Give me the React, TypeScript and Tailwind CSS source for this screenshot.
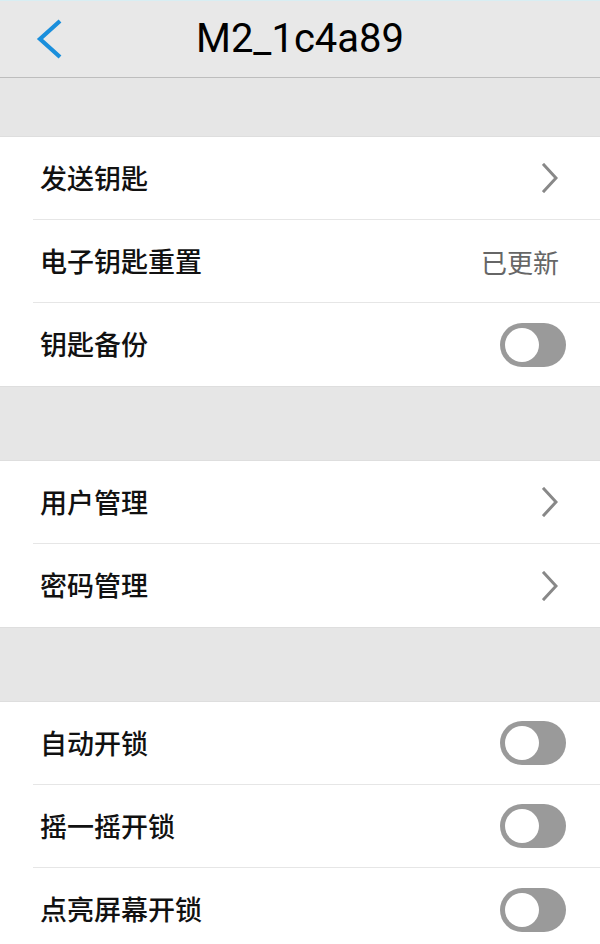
import React from "react";

const Chevron = () => (
  <svg width="16" height="30" viewBox="0 0 16 30" className="block">
    <polyline points="2,2 14,15 2,28" fill="none" stroke="#888888" strokeWidth="3" strokeLinecap="square" strokeLinejoin="miter" />
  </svg>
);

const Toggle = () => (
  <div className="w-[66px] h-[44px] rounded-full bg-[#9a9a9a] flex items-center pl-[5px]">
    <div className="w-[34px] h-[34px] rounded-full bg-white" />
  </div>
);

type RowProps = { label: string; right: "chevron" | "toggle" | "text"; text?: string; last?: boolean };

const Row = ({ label, right, text, last }: RowProps) => (
  <div className="pl-[33px] bg-white">
    <div
      className={
        "h-[83px] flex items-center justify-between pl-[7px] " +
        (last ? "" : "border-b border-[#e6e6e6] ") +
        (right === "toggle" ? "pr-[34px]" : right === "chevron" ? "pr-[42px]" : "pr-[41px]")
      }
    >
      <span className="text-[27px] font-medium text-[#111]">{label}</span>
      {right === "chevron" && <Chevron />}
      {right === "toggle" && <Toggle />}
      {right === "text" && <span className="text-[26px] text-[#666]">{text}</span>}
    </div>
  </div>
);

const Group = ({ children }: { children: React.ReactNode }) => (
  <div className="bg-white border-y border-[#dedede]">{children}</div>
);

export default function App() {
  return (
    <div
      className="w-[600px] h-[944px] overflow-hidden bg-[#e6e6e6]"
      style={{ fontFamily: '"Noto Sans CJK SC", "Noto Sans", sans-serif' }}
    >
      <div className="relative h-[78px] bg-[#e8e8e8] border-b border-[#bdbdbd] flex items-center justify-center">
        <div className="absolute left-0 right-0 top-0 h-px bg-[#d8eef3]" />
        <svg width="30" height="44" viewBox="0 0 30 44" className="absolute left-[34px] top-[17px]">
          <polyline points="26,4 6,22 26,40" fill="none" stroke="#1a8fdc" strokeWidth="4.2" />
        </svg>
        <span className="text-[40px] text-black leading-none" style={{ fontFamily: "Roboto, sans-serif" }}>
          M2_1c4a89
        </span>
      </div>
      <div className="h-[58px]" />
      <Group>
        <Row label="发送钥匙" right="chevron" />
        <Row label="电子钥匙重置" right="text" text="已更新" />
        <Row label="钥匙备份" right="toggle" last />
      </Group>
      <div className="h-[73px]" />
      <Group>
        <Row label="用户管理" right="chevron" />
        <Row label="密码管理" right="chevron" last />
      </Group>
      <div className="h-[73px]" />
      <Group>
        <Row label="自动开锁" right="toggle" />
        <Row label="摇一摇开锁" right="toggle" />
        <Row label="点亮屏幕开锁" right="toggle" last />
      </Group>
    </div>
  );
}
